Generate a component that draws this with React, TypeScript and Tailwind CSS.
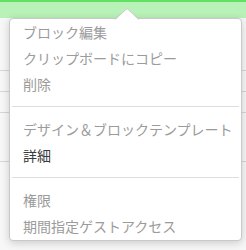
import React from "react";

const font = { fontFamily: '"Noto Sans CJK JP", "Noto Sans", sans-serif' };

function Item({ label, dark }: { label: string; dark?: boolean }) {
  return (
    <div
      className={`h-[26px] flex items-center pl-[13px] text-[14px] leading-none ${
        dark ? "text-[#3a3a3a]" : "text-[#9b9b9b]"
      }`}
    >
      {label}
    </div>
  );
}

function Sep() {
  return <div className="h-px mx-[2px] my-[9px] bg-[#dedede]" />;
}

export default function App() {
  return (
    <div className="relative w-[246px] h-[250px] overflow-hidden bg-white" style={font}>
      <div className="h-[18px] bg-[#b8f2b8] border-t-2 border-[#63e063]" />
      <div className="flex flex-col">
        <div className="h-[53px] border-b border-[#d6d6d6] bg-[#f7f7f7]" />
        <div className="h-[21px] border-b border-[#d6d6d6] bg-[#f7f7f7]" />
        <div className="h-[21px] border-b border-[#d6d6d6] bg-[#f7f7f7]" />
        <div className="h-[49px] border-b border-[#d6d6d6] bg-[#f7f7f7]" />
        <div className="h-[88px] bg-[#f7f7f7]" />
      </div>

      <div className="absolute left-[9px] top-[18px] w-[233px] h-[223px] bg-white border border-[#c9c9c9] rounded-[4px] shadow-[0_2px_8px_rgba(0,0,0,0.18)]">
        <svg
          className="absolute left-[105px] top-[-11px]"
          width="24"
          height="12"
          viewBox="0 0 24 12"
        >
          <path d="M0 12 L12 0.5 L24 12 Z" fill="#ffffff" />
          <path d="M0 11.5 L12 0.5 L24 11.5" fill="none" stroke="#c9c9c9" strokeWidth="1" />
        </svg>
        <div>
          <Item label="ブロック編集" />
          <Item label="クリップボードにコピー" />
          <Item label="削除" />
          <Sep />
          <Item label="デザイン＆ブロックテンプレート" />
          <Item label="詳細" dark />
          <Sep />
          <Item label="権限" />
          <Item label="期間指定ゲストアクセス" />
        </div>
      </div>
    </div>
  );
}
